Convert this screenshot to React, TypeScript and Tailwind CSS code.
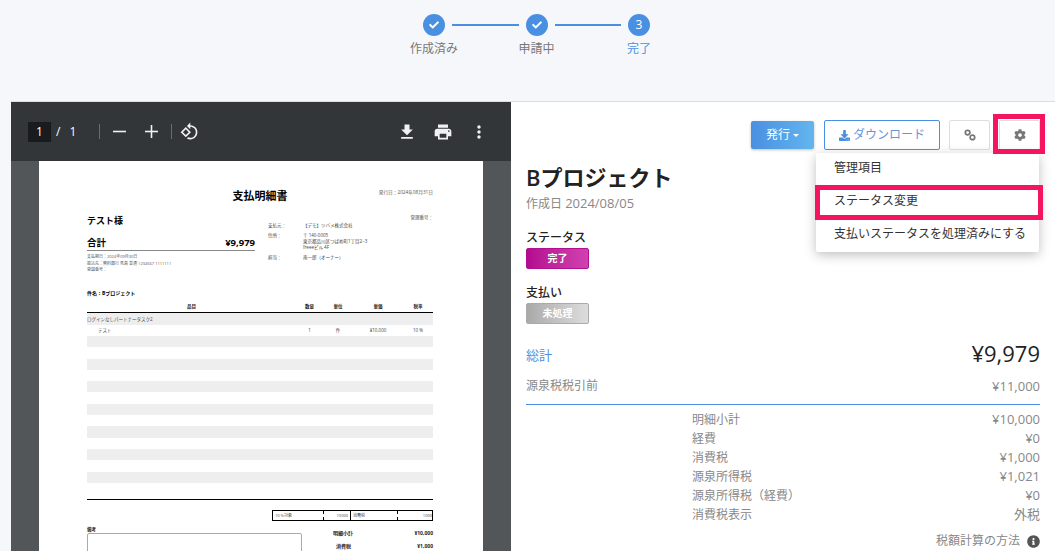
import { FaCheck, FaCog, FaDownload, FaInfoCircle } from 'react-icons/fa'

const steps = [
  { label: '作成済み', done: true },
  { label: '申請中', done: true },
  { label: '完了', done: false },
]

const breakdown = [
  ['明細小計', '¥10,000'],
  ['経費', '¥0'],
  ['消費税', '¥1,000'],
  ['源泉所得税', '¥1,021'],
  ['源泉所得税（経費）', '¥0'],
  ['消費税表示', '外税'],
]

const menuItems = ['管理項目', 'ステータス変更', '支払いステータスを処理済みにする']

// blank rows of the invoice table, the odd ones are striped
const blankRows = Array.from({ length: 14 }, (_, i) => i)

function Stepper() {
  return (
    <div className="flex h-[101px] items-start pl-[423px] pt-[14px]">
      {steps.map((step, i) => (
        <div key={step.label} className="flex items-start">
          <div className="flex w-[22px] flex-col items-center">
            <div className="flex h-[22px] w-[22px] items-center justify-center rounded-full bg-[#4a90e2] text-[12px] text-white">
              {step.done ? <FaCheck className="h-[10px] w-[10px]" /> : '3'}
            </div>
            <div
              className={`mt-[4px] whitespace-nowrap text-[12px] leading-[18px] ${
                step.done ? 'text-[#777]' : 'text-[#4a90e2]'
              }`}
            >
              {step.label}
            </div>
          </div>
          {i < 2 && <div className="mx-[7px] mt-[10px] h-[2px] w-[66.5px] bg-[#4a90e2]" />}
        </div>
      ))}
    </div>
  )
}

function PdfToolbar() {
  return (
    <div className="flex h-[59px] items-center bg-[#323639] pl-[17px] pr-[22px] text-white">
      <div className="flex h-[20px] w-[23px] items-center justify-center bg-[#191b1c] text-[12px]">1</div>
      <span className="ml-[5px] text-[12px]">/</span>
      <span className="ml-[9px] text-[12px]">1</span>
      <div className="ml-[23px] h-[15px] w-px bg-[#6b6e70]" />
      <svg className="ml-[13px] h-[13px] w-[13px]" viewBox="0 0 13 13" fill="#f1f1f1">
        <rect x="0" y="5.7" width="13" height="1.6" />
      </svg>
      <svg className="ml-[19px] h-[13px] w-[13px]" viewBox="0 0 13 13" fill="#f1f1f1">
        <rect x="0" y="5.7" width="13" height="1.6" />
        <rect x="5.7" y="0" width="1.6" height="13" />
      </svg>
      <div className="ml-[13px] h-[15px] w-px bg-[#6b6e70]" />
      <svg className="ml-[8px] h-[19px] w-[19px]" viewBox="0 0 24 24" fill="#f1f1f1">
        <path d="M7.34 6.41L.86 12.9l6.49 6.48 6.49-6.48-6.5-6.49zM3.69 12.9l3.66-3.66L11 12.9l-3.66 3.66-3.65-3.66zm15.67-6.26C17.61 4.88 15.3 4 13 4V.76L8.76 5 13 9.24V6c1.79 0 3.58.68 4.95 2.05 2.73 2.73 2.73 7.17 0 9.9C16.58 19.32 14.79 20 13 20c-.97 0-1.94-.21-2.84-.61l-1.49 1.49C10.02 21.62 11.51 22 13 22c2.3 0 4.61-.88 6.36-2.64 3.52-3.51 3.52-9.21 0-12.72z" />
      </svg>
      <div className="ml-auto flex items-center">
        <svg className="h-[20px] w-[20px]" viewBox="0 0 24 24" fill="#f1f1f1">
          <path d="M19 9h-4V3H9v6H5l7 7 7-7zM5 18v2h14v-2H5z" />
        </svg>
        <svg className="ml-[16px] h-[20px] w-[20px]" viewBox="0 0 24 24" fill="#f1f1f1">
          <path d="M19 8H5c-1.66 0-3 1.34-3 3v6h4v4h12v-4h4v-6c0-1.66-1.34-3-3-3zm-3 11H8v-5h8v5zm3-7c-.55 0-1-.45-1-1s.45-1 1-1 1 .45 1 1-.45 1-1 1zm-1-9H6v4h12V3z" />
        </svg>
        <svg className="ml-[16px] h-[20px] w-[20px]" viewBox="0 0 24 24" fill="#f1f1f1">
          <path d="M12 8c1.1 0 2-.9 2-2s-.9-2-2-2-2 .9-2 2 .9 2 2 2zm0 2c-1.1 0-2 .9-2 2s.9 2 2 2 2-.9 2-2-.9-2-2-2zm0 6c-1.1 0-2 .9-2 2s.9 2 2 2 2-.9 2-2-.9-2-2-2z" />
        </svg>
      </div>
    </div>
  )
}

function Paper() {
  return (
    <div className="mx-[28px] h-[390px] overflow-hidden bg-white pl-[48px] pr-[50px] pt-[26px] text-[#222]">
      <div className="grid h-[25px] grid-cols-3 items-start">
        <div />
        <div className="whitespace-nowrap text-center text-[11px] font-bold leading-[18px] text-black">支払明細書</div>
        <div className="pt-[2px] text-right text-[4.7px] leading-[6px] text-[#555]">発行日：2024年08月31日</div>
      </div>
      <div className="flex h-[72px]">
        <div className="w-[168px]">
          <div className="pt-[3px] text-[9px] font-bold leading-[12px] text-black">テスト様</div>
          <div className="mt-[9px] flex justify-between border-b border-[#888] text-[9.5px] font-bold leading-[14px] text-black">
            <span>合計</span>
            <span>¥9,979</span>
          </div>
          <div className="mt-[3px] text-[4px] leading-[6.5px] text-[#555]">
            <div>支払期日：2024年09月30日</div>
            <div>振込先：無料銀行 馬島 普通 1234567 1111111</div>
            <div>登録番号：</div>
          </div>
        </div>
        <div className="ml-[13px] flex-1 text-[4.5px] leading-[6px] text-[#444]">
          <div className="pt-[2px] text-right">管理番号：</div>
          <div className="mt-[2px] flex">
            <span className="w-[35px]">支払元：</span>
            <span>【デモ】ツバメ株式会社</span>
          </div>
          <div className="mt-[4px] flex">
            <span className="w-[35px]">住所：</span>
            <div>
              <div>〒 140-0005</div>
              <div>東京都品川区つばめ町1丁目2−3</div>
              <div>freeeビル 4F</div>
            </div>
          </div>
          <div className="mt-[4px] flex">
            <span className="w-[35px]">担当：</span>
            <span>南一郎（オーナー）</span>
          </div>
        </div>
      </div>
      <div className="mt-[5px] text-[5px] font-bold leading-[8px] text-black">件名：Bプロジェクト</div>
      <div className="mt-[5px] grid grid-cols-[209px_27px_30px_50px_30px] border-b border-black pb-[2px] text-center text-[4.5px] font-bold leading-[8px]">
        <span>品目</span>
        <span>数量</span>
        <span>単位</span>
        <span>単価</span>
        <span>税率</span>
      </div>
      <div className="h-[12px] bg-[#eee] text-[4.5px] leading-[12px] text-[#444]">ログインなしパートナータスク2</div>
      <div className="grid h-[11px] grid-cols-[209px_27px_30px_50px_30px] text-center text-[4.5px] leading-[11px] text-[#444]">
        <span className="pl-[11px] text-left">テスト</span>
        <span>1</span>
        <span>件</span>
        <span>¥10,000</span>
        <span>10 %</span>
      </div>
      {blankRows.map((i) => (
        <div key={i} className={`h-[11.3px] ${i % 2 === 0 ? 'bg-[#eee]' : ''}`} />
      ))}
      <div className="mt-[5px] h-px bg-black" />
      <div className="ml-[185px] mt-[10px] grid h-[11px] grid-cols-[51px_27px_47px_36px] border border-black text-[4px] leading-[9px] text-[#444]">
        <span className="border-r border-dashed border-black pl-[2px]">10 %対象</span>
        <span className="border-r border-black pr-[2px] text-right">10000</span>
        <span className="border-r border-dashed border-black pl-[2px]">消費税</span>
        <span className="pr-[2px] text-right">1000</span>
      </div>
      <div className="mt-[5px] flex">
        <div className="w-[215px]">
          <div className="text-[4.5px] font-bold leading-[6px]">備考</div>
          <div className="mt-[1px] h-[40px] rounded-t-[2px] border border-[#aaa]" />
        </div>
        <div className="ml-[31px] flex-1 pt-[1px] text-[5px] font-bold leading-[13px]">
          <div className="flex justify-between">
            <span>明細小計</span>
            <span>¥10,000</span>
          </div>
          <div className="flex justify-between pl-[3px]">
            <span>消費税</span>
            <span>¥1,000</span>
          </div>
        </div>
      </div>
    </div>
  )
}

function PdfViewer() {
  return (
    <div className="w-[500px] bg-[#525659]">
      <PdfToolbar />
      <Paper />
    </div>
  )
}

function ActionBar() {
  return (
    <div className="flex items-center justify-end">
      <button className="flex h-[28px] w-[63px] items-center justify-center rounded-[2px] bg-gradient-to-r from-[#4a90e2] to-[#63b5ee] text-[12px] text-white shadow-[0_1px_3px_rgba(0,0,0,0.25)]">
        発行
        <span className="ml-[3px] h-0 w-0 border-x-[3px] border-t-[3px] border-x-transparent border-t-white" />
      </button>
      <button className="ml-[10px] flex h-[30px] w-[116px] items-center justify-center rounded-[2px] border border-[#4a90e2] bg-white text-[12px] text-[#6b93d8]">
        <FaDownload className="mr-[3px] h-[11px] w-[11px] text-[#4a90e2]" />
        ダウンロード
      </button>
      <button className="ml-[9px] flex h-[30px] w-[41px] items-center justify-center rounded-[2px] border border-[#ddd] bg-white">
        <svg className="h-[12px] w-[12px]" viewBox="0 0 12 12" fill="none" stroke="#777" strokeWidth="1.7">
          <circle cx="3.6" cy="3.6" r="2.3" />
          <circle cx="8.4" cy="8.4" r="2.3" />
        </svg>
      </button>
      <button className="ml-[9px] flex h-[30px] w-[41px] items-center justify-center rounded-[2px] border border-[#ddd] bg-white">
        <FaCog className="h-[12px] w-[12px] text-[#777]" />
      </button>
    </div>
  )
}

function DropdownMenu() {
  return (
    <div className="absolute left-[305px] top-[51px] w-[223px] rounded-[2px] bg-white text-[12px] text-[#333] shadow-[0_3px_12px_rgba(0,0,0,0.25)]">
      {menuItems.map((item) => (
        <div key={item} className="flex h-[33px] items-center whitespace-nowrap pb-[3px] pl-[18px]">
          {item}
        </div>
      ))}
    </div>
  )
}

function Summary() {
  return (
    <div className="px-[15px] pt-[18px]">
      <ActionBar />
      <h1 className="mt-[12px] text-[22px] font-semibold leading-[30px] text-[#222]">Bプロジェクト</h1>
      <p className="mt-[2px] text-[12px] leading-[18px] text-[#888]">
        作成日 <span className="text-[13px]">2024/08/05</span>
      </p>
      <div className="mt-[16px] text-[12px] font-medium leading-[18px] text-[#222]">ステータス</div>
      <div className="mt-px flex h-[21px] w-[63px] items-center justify-center rounded-[2px] border border-[#b0108f] bg-gradient-to-r from-[#b4088f] to-[#d040b0] text-[10px] font-bold text-white">
        完了
      </div>
      <div className="mt-[15px] text-[12px] font-medium leading-[18px] text-[#222]">支払い</div>
      <div className="mt-px flex h-[21px] w-[63px] items-center justify-center rounded-[2px] border border-[#aaa] bg-gradient-to-r from-[#aaa] to-[#ddd] text-[10px] font-bold text-white">
        未処理
      </div>
      <div className="mt-[14px] flex items-center justify-between">
        <span className="pt-[5px] text-[13px] text-[#4a90e2]">総計</span>
        <span className="text-[22px] leading-[30px] text-[#222]">¥9,979</span>
      </div>
      <div className="mt-[9px] flex justify-between text-[12px] leading-[18px] text-[#888]">
        <span>源泉税税引前</span>
        <span className="text-[13px]">¥11,000</span>
      </div>
      <div className="mt-[9px] h-px bg-[#4a90e2]" />
      <div className="mt-[5px] pl-[166px] text-[12px] leading-[19px] text-[#888]">
        {breakdown.map(([label, value]) => (
          <div key={label} className="flex justify-between">
            <span>{label}</span>
            <span className="text-[13px]">{value}</span>
          </div>
        ))}
      </div>
      <div className="mt-[8px] flex items-center justify-end text-[12px] leading-[18px] text-[#888]">
        税額計算の方法
        <FaInfoCircle className="ml-[7px] h-[13px] w-[13px] text-[#555]" />
      </div>
    </div>
  )
}

export default function App() {
  return (
    <div className="h-[551px] w-[1055px] overflow-hidden bg-[#f5f7fb] font-['Open_Sans','Noto_Sans_CJK_JP',sans-serif]">
      <Stepper />
      <div className="ml-[11px] flex h-[450px] border-t border-[#ddd]">
        <PdfViewer />
        <div className="relative flex-1 bg-white">
          <Summary />
          <DropdownMenu />
          {/* pink annotation boxes from the manual */}
          <div className="absolute left-[482px] top-[12px] h-[40px] w-[52px] border-[5px] border-[#f5145f]" />
          <div className="absolute left-[304px] top-[83px] h-[35px] w-[228px] border-[5px] border-[#f5145f]" />
        </div>
      </div>
    </div>
  )
}
